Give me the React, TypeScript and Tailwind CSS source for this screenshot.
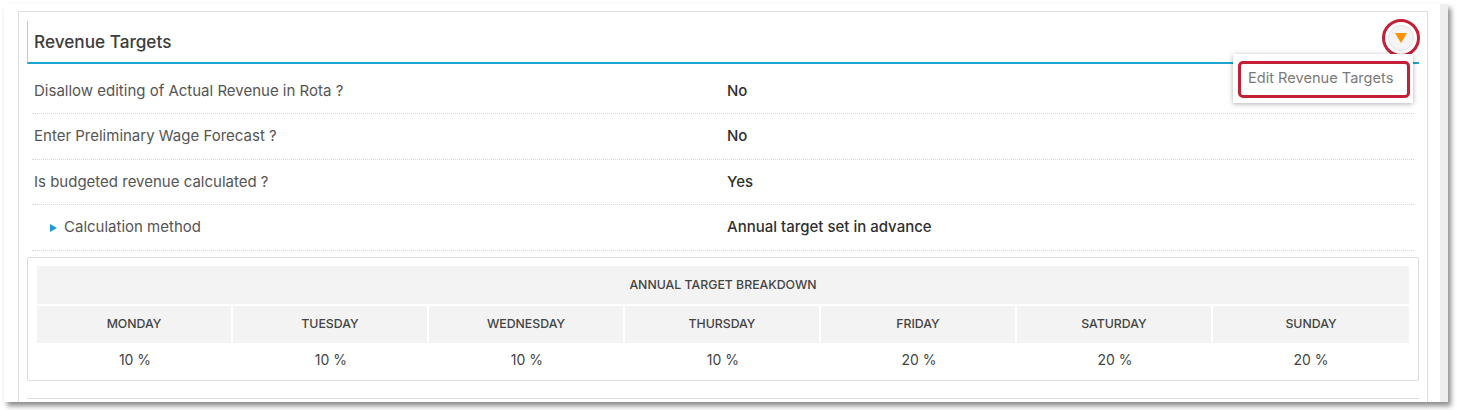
import React from "react";

const rows = [
  { label: "Disallow editing of Actual Revenue in Rota ?", value: "No" },
  { label: "Enter Preliminary Wage Forecast ?", value: "No" },
  { label: "Is budgeted revenue calculated ?", value: "Yes" },
];

const days = [
  ["MONDAY", "10 %"],
  ["TUESDAY", "10 %"],
  ["WEDNESDAY", "10 %"],
  ["THURSDAY", "10 %"],
  ["FRIDAY", "20 %"],
  ["SATURDAY", "20 %"],
  ["SUNDAY", "20 %"],
];

export default function App() {
  return (
    <div
      className="w-[1457px] h-[410px] bg-white overflow-hidden pt-[4px] pl-[4px]"
      style={{ fontFamily: "Inter, 'Noto Sans', sans-serif" }}
    >
      <div className="relative w-[1444px] h-[398px] bg-white shadow-[3px_4px_5px_rgba(0,0,0,0.45)] overflow-hidden flex">
        <div className="flex-1 pl-[14px] pt-[7px]">
          <div className="w-[1410px] h-[400px] border border-[#dedede] px-[8px] pt-[9px]">
            {/* header */}
            <div className="relative h-[43px] border-l border-[#9fd3ea] border-b-2 border-b-[#1fa3d3] flex items-center pl-[6px]">
              <span className="text-[17.2px] font-medium text-[#3d3d3d] mt-[1px]">Revenue Targets</span>
              <div className="absolute right-[5px] top-[4px] w-[26px] h-[26px] rounded-full bg-[#f4f4f4] border border-[#e2e2e2] flex items-center justify-center">
                <svg width="12" height="10" viewBox="0 0 12 10">
                  <polygon points="0,0 12,0 6,10" fill="#ff9000" />
                </svg>
              </div>
              <div className="absolute right-[-1px] top-[-2px] w-[38px] h-[38px] rounded-full border-[3px] border-[#c41f36]" />
            </div>

            {/* menu */}
            <div className="relative">
              <div className="absolute right-[6px] top-[-10px] w-[180px] h-[49px] bg-white shadow-[0_1px_5px_rgba(0,0,0,0.3)] z-10 flex items-center">
                <div className="ml-[5px] mt-[1px] w-[172px] h-[37px] rounded-[5px] border-[3px] border-[#c41f36] flex items-center pl-[7px]">
                  <span className="text-[14.6px] text-[#7a7a7a]">Edit Revenue Targets</span>
                </div>
              </div>
            </div>

            {/* rows */}
            <div className="px-[5px] pt-[4px] text-[15px]">
              {rows.map((r, i) => (
                <div
                  key={i}
                  className={`${i === 0 ? "h-[46px] pt-[2px]" : i === 2 ? "h-[45px]" : "h-[46px]"} flex items-center border-b border-dotted border-[#d6d6d6]`}
                >
                  <div className="w-[695px] pl-[2px] text-[#555]">{r.label}</div>
                  <div className="font-medium text-[#2f2f2f]">{r.value}</div>
                </div>
              ))}
              <div className="h-[46px] flex items-center border-b border-dotted border-[#d6d6d6]">
                <div className="w-[695px] pl-[18px] text-[#555] flex items-center">
                  <svg width="8" height="10" viewBox="0 0 8 10" className="mr-[6px]">
                    <polygon points="0,1 7,5 0,9" fill="#1f9bd1" />
                  </svg>
                  Calculation method
                </div>
                <div className="font-medium text-[#2f2f2f]">Annual target set in advance</div>
              </div>
            </div>

            {/* table */}
            <div className="mt-[6px] border border-[#dcdcdc] rounded-[2px] px-[9px] pt-[8px] pb-[7px]">
              <table className="w-full border-separate border-spacing-0 text-[#444]">
                <thead>
                  <tr>
                    <th
                      colSpan={7}
                      className="h-[40px] bg-[#f3f3f3] text-[12.3px] font-medium text-[#444] border-b-2 border-white"
                    >
                      ANNUAL TARGET BREAKDOWN
                    </th>
                  </tr>
                  <tr>
                    {days.map(([d], i) => (
                      <th
                        key={d}
                        className={`h-[37px] bg-[#f3f3f3] text-[12.3px] font-medium text-[#444] w-[14.285%] ${
                          i < 6 ? "border-r-2 border-white" : ""
                        }`}
                      >
                        {d}
                      </th>
                    ))}
                  </tr>
                </thead>
                <tbody>
                  <tr>
                    {days.map(([d, v]) => (
                      <td key={d} className="h-[30px] text-center text-[14px] text-[#444] pt-[2px]">
                        {v}
                      </td>
                    ))}
                  </tr>
                </tbody>
              </table>
            </div>

            <div className="mt-[17px] border-t border-[#dcdcdc] h-[20px]" />
          </div>
        </div>
        <div className="w-[8px] h-full bg-[#eeeeee]" />
      </div>
    </div>
  );
}
